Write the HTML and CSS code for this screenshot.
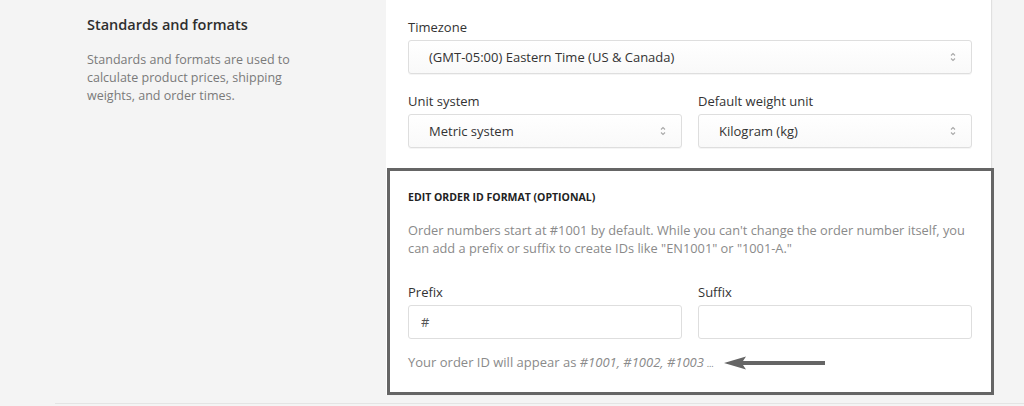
FILE: index.html
```html
<!DOCTYPE html>
<html lang="en">
<head>
  <meta charset="UTF-8" />
  <meta name="viewport" content="width=device-width, initial-scale=1.0" />
  <title>Standards and formats</title>
  <link rel="stylesheet" href="styles.css">
</head>
<body>
  <div class="section">
    <div class="annotation">
      <h2>Standards and formats</h2>
      <p>Standards and formats are used to calculate product prices, shipping weights, and order times.</p>
    </div>

    <div class="card">
      <div class="card-section">
        <label>Timezone</label>
        <div class="select">
          <span>(GMT-05:00) Eastern Time (US &amp; Canada)</span>
          <svg class="arrows" width="8" height="12" viewBox="0 0 8 12"><path d="M2 4.5 L4 2.5 L6 4.5 M2 7.5 L4 9.5 L6 7.5" fill="none" stroke="#a8a8a8" stroke-width="1.1"/></svg>
        </div>

        <div class="row">
          <div class="field">
            <label>Unit system</label>
            <div class="select">
              <span>Metric system</span>
              <svg class="arrows" width="8" height="12" viewBox="0 0 8 12"><path d="M2 4.5 L4 2.5 L6 4.5 M2 7.5 L4 9.5 L6 7.5" fill="none" stroke="#a8a8a8" stroke-width="1.1"/></svg>
            </div>
          </div>
          <div class="field">
            <label>Default weight unit</label>
            <div class="select">
              <span>Kilogram (kg)</span>
              <svg class="arrows" width="8" height="12" viewBox="0 0 8 12"><path d="M2 4.5 L4 2.5 L6 4.5 M2 7.5 L4 9.5 L6 7.5" fill="none" stroke="#a8a8a8" stroke-width="1.1"/></svg>
            </div>
          </div>
        </div>
      </div>

      <div class="card-section highlighted">
        <h3>Edit order ID format (optional)</h3>
        <p class="muted">Order numbers start at #1001 by default. While you can't change the order number itself, you can add a prefix or suffix to create IDs like "EN1001" or "1001-A."</p>

        <div class="row">
          <div class="field">
            <label>Prefix</label>
            <input type="text" value="#" />
          </div>
          <div class="field">
            <label>Suffix</label>
            <input type="text" value="" />
          </div>
        </div>

        <div class="help">
          <span>Your order ID will appear as <em>#1001, #1002, #1003 <small>...</small></em></span>
          <svg class="pointer" width="102" height="14" viewBox="0 0 102 14"><path d="M0 7 L22 0.5 L19 5 L101 5 L101 9 L19 9 L22 13.5 Z" fill="#656565"/></svg>
        </div>
      </div>
    </div>
  </div>
</body>
</html>
```

FILE: styles.css
```css
* { box-sizing: border-box; }

body {
  margin: 0;
  font-family: "Open Sans", "Noto Sans", Arial, sans-serif;
  background: #f4f4f4;
  color: #333;
  height: 406px;
  overflow: hidden;
}

.section {
  display: flex;
  align-items: flex-start;
  margin-left: 55px;
  padding-left: 32px;
  height: 404px;
  border-bottom: 1px solid #e4e4e4;
}

.annotation {
  width: 299px;
  padding-top: 14px;
}

.annotation h2 {
  font-size: 14.5px;
  font-weight: 600;
  color: #2e2e2e;
  margin: 0 0 15px;
  line-height: 22px;
}

.annotation p {
  max-width: 212px;
  font-size: 12.5px;
  line-height: 18px;
  color: #7a7a7a;
  margin: 0;
}

.card {
  width: 605px;
  background: #fff;
  box-shadow: 1px 0 1px rgba(0,0,0,0.08);
}

.card-section {
  padding: 17px 19px 0 22px;
  height: 168px;
}

label {
  display: block;
  font-size: 13px;
  line-height: 20px;
  color: #333;
  margin-bottom: 3px;
}

.select {
  display: flex;
  align-items: center;
  justify-content: space-between;
  height: 34px;
  padding: 0 14px 0 20px;
  border: 1px solid #dedede;
  border-radius: 3px;
  background: linear-gradient(#fff, #f9f9f9);
  box-shadow: 0 1px 0 rgba(0,0,0,0.04);
  font-size: 13px;
  color: #333;
  margin-bottom: 17px;
}

.row {
  display: flex;
  gap: 16px;
}

.field {
  flex: 1;
}

.highlighted {
  height: auto;
  margin: 0 -3px 0 1px;
  border: 3px solid #656565;
  padding: 18px 19px 19px 18px;
}

h3 {
  font-size: 10.5px;
  font-weight: 700;
  text-transform: uppercase;
  color: #222;
  line-height: 16px;
  margin: 0 0 16px;
}

.muted {
  font-size: 12.8px;
  line-height: 18px;
  color: #8a8a8a;
  margin: 0 0 25px;
}

input {
  display: block;
  width: 100%;
  height: 34px;
  border: 1px solid #dedede;
  border-radius: 3px;
  padding: 0 12px;
  font-family: inherit;
  font-size: 13px;
  color: #555;
  margin-bottom: 14px;
}

.help {
  display: flex;
  align-items: center;
  font-size: 13px;
  line-height: 18px;
  color: #8a8a8a;
}

.help small {
  font-size: 9px;
}

.pointer {
  margin-left: 10px;
}
```
